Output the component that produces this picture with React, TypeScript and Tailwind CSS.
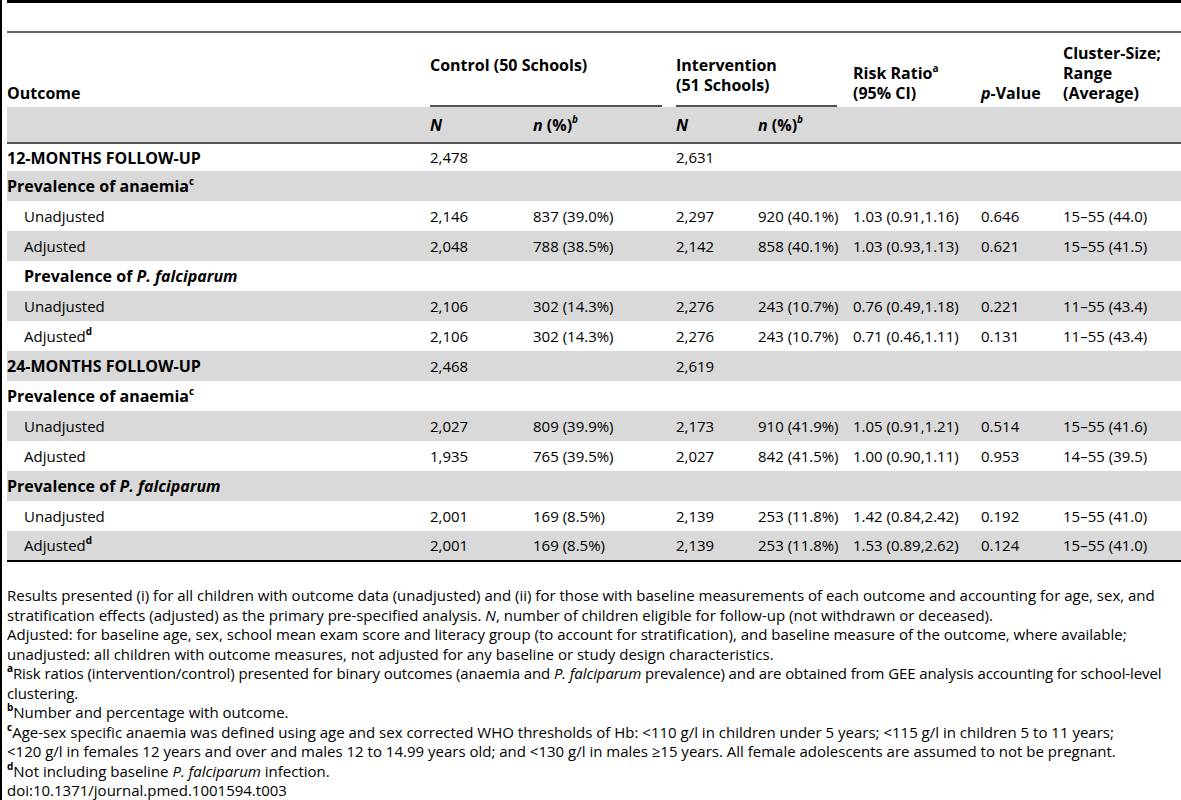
import React from "react";

type Row = {
  label: React.ReactNode;
  kind: "section" | "group" | "data";
  indent?: boolean;
  cells?: string[];
  h?: string;
};

const Sup = ({ c }: { c: string }) => (
  <sup className="relative top-[-1px] align-super text-[10px] font-bold leading-none">{c}</sup>
);

const rows: Row[] = [
  { label: "12-MONTHS FOLLOW-UP", kind: "section", cells: ["2,478", "", "2,631", "", "", "", ""], h: "h-[28px]" },
  { label: <>Prevalence of anaemia<Sup c="c" /></>, kind: "group" },
  { label: "Unadjusted", kind: "data", indent: true, cells: ["2,146", "837 (39.0%)", "2,297", "920 (40.1%)", "1.03 (0.91,1.16)", "0.646", "15–55 (44.0)"] },
  { label: "Adjusted", kind: "data", indent: true, cells: ["2,048", "788 (38.5%)", "2,142", "858 (40.1%)", "1.03 (0.93,1.13)", "0.621", "15–55 (41.5)"] },
  { label: <>Prevalence of <i>P. falciparum</i></>, kind: "group", indent: true },
  { label: "Unadjusted", kind: "data", indent: true, cells: ["2,106", "302 (14.3%)", "2,276", "243 (10.7%)", "0.76 (0.49,1.18)", "0.221", "11–55 (43.4)"] },
  { label: <>Adjusted<Sup c="d" /></>, kind: "data", indent: true, cells: ["2,106", "302 (14.3%)", "2,276", "243 (10.7%)", "0.71 (0.46,1.11)", "0.131", "11–55 (43.4)"] },
  { label: "24-MONTHS FOLLOW-UP", kind: "section", cells: ["2,468", "", "2,619", "", "", "", ""] },
  { label: <>Prevalence of anaemia<Sup c="c" /></>, kind: "group" },
  { label: "Unadjusted", kind: "data", indent: true, cells: ["2,027", "809 (39.9%)", "2,173", "910 (41.9%)", "1.05 (0.91,1.21)", "0.514", "15–55 (41.6)"] },
  { label: "Adjusted", kind: "data", indent: true, cells: ["1,935", "765 (39.5%)", "2,027", "842 (41.5%)", "1.00 (0.90,1.11)", "0.953", "14–55 (39.5)"] },
  { label: <>Prevalence of <i>P. falciparum</i></>, kind: "group" },
  { label: "Unadjusted", kind: "data", indent: true, cells: ["2,001", "169 (8.5%)", "2,139", "253 (11.8%)", "1.42 (0.84,2.42)", "0.192", "15–55 (41.0)"] },
  { label: <>Adjusted<Sup c="d" /></>, kind: "data", indent: true, cells: ["2,001", "169 (8.5%)", "2,139", "253 (11.8%)", "1.53 (0.89,2.62)", "0.124", "15–55 (41.0)"] },
];

export default function App() {
  return (
    <div
      className="h-[800px] w-[1181px] overflow-hidden border-l-2 border-black bg-white pl-[5px] text-black"
      style={{ fontFamily: '"Open Sans", "Noto Sans", sans-serif' }}
    >
      <div className="h-[3px] bg-black" />
      <div className="h-[28px]" />
      <div className="h-[2px] bg-[#666666]" />
      <table className="w-full table-fixed border-collapse text-[15px]">
        <colgroup>
          <col className="w-[423px]" />
          <col className="w-[103px]" />
          <col className="w-[143px]" />
          <col className="w-[82px]" />
          <col className="w-[95px]" />
          <col className="w-[128px]" />
          <col className="w-[82px]" />
          <col className="w-[118px]" />
        </colgroup>
        <thead>
          <tr className="h-[74px] text-left align-bottom text-[16px] font-bold leading-[20px]">
            <th className="p-0 pb-[4px]">Outcome</th>
            <th colSpan={2} className="p-0 pr-[14px]">
              <div className="border-b-2 border-[#555555] pb-[30px]">Control (50 Schools)</div>
            </th>
            <th colSpan={2} className="p-0 pr-[16px]">
              <div className="border-b-2 border-[#555555] pb-[10px]">
                Intervention
                <br />
                (51 Schools)
              </div>
            </th>
            <th className="p-0 pb-[4px]">
              Risk Ratio<Sup c="a" />
              <br />
              (95% CI)
            </th>
            <th className="p-0 pb-[4px]">
              <i className="font-bold">p</i>-Value
            </th>
            <th className="p-0 pb-[4px]">
              Cluster-Size;
              <br />
              Range
              <br />
              (Average)
            </th>
          </tr>
          <tr className="h-[36px] border-b-2 border-[#555555] bg-[#d9d9d9] text-left text-[16px] font-bold italic">
            <th className="p-0" />
            <th className="p-0 font-bold">N</th>
            <th className="p-0 font-bold">
              n <span className="not-italic">(%)</span>
              <Sup c="b" />
            </th>
            <th className="p-0 font-bold">N</th>
            <th className="p-0 font-bold">
              n <span className="not-italic">(%)</span>
              <Sup c="b" />
            </th>
            <th className="p-0" />
            <th className="p-0" />
            <th className="p-0" />
          </tr>
        </thead>
        <tbody className="border-b-2 border-black">
          {rows.map((r, i) => (
            <tr key={i} className={`${r.h ?? "h-[30px]"} ${i % 2 === 1 ? "bg-[#d9d9d9]" : "bg-white"}`}>
              <td
                className={`whitespace-nowrap p-0 ${r.indent ? "pl-[17px]" : ""} ${
                  r.kind === "data" ? "" : "text-[16px] font-bold"
                }`}
              >
                {r.label}
              </td>
              {(r.cells ?? ["", "", "", "", "", "", ""]).map((c, j) => (
                <td key={j} className="whitespace-nowrap p-0">
                  {c}
                </td>
              ))}
            </tr>
          ))}
        </tbody>
      </table>
      <div className="pt-[24px] text-[15px] leading-[19.5px]">
        <p>
          Results presented (i) for all children with outcome data (unadjusted) and (ii) for those with baseline
          measurements of each outcome and accounting for age, sex, and stratification effects (adjusted) as the
          primary pre-specified analysis. <i>N</i>, number of children eligible for follow-up (not withdrawn or
          deceased).
        </p>
        <p>
          Adjusted: for baseline age, sex, school mean exam score and literacy group (to account for stratification),
          and baseline measure of the outcome, where available;
          <br />
          unadjusted: all children with outcome measures, not adjusted for any baseline or study design
          characteristics.
        </p>
        <p className="tracking-[-0.1px]">
          <Sup c="a" />
          Risk ratios (intervention/control) presented for binary outcomes (anaemia and <i>P. falciparum</i>{" "}
          prevalence) and are obtained from GEE analysis accounting for school-level
          <br />
          clustering.
        </p>
        <p>
          <Sup c="b" />
          Number and percentage with outcome.
        </p>
        <p>
          <Sup c="c" />
          Age-sex specific anaemia was defined using age and sex corrected WHO thresholds of Hb: &lt;110 g/l in
          children under 5 years; &lt;115 g/l in children 5 to 11 years;
          <br />
          &lt;120 g/l in females 12 years and over and males 12 to 14.99 years old; and &lt;130 g/l in males ≥15
          years. All female adolescents are assumed to not be pregnant.
        </p>
        <p>
          <Sup c="d" />
          Not including baseline <i>P. falciparum</i> infection.
        </p>
        <p>doi:10.1371/journal.pmed.1001594.t003</p>
      </div>
    </div>
  );
}
